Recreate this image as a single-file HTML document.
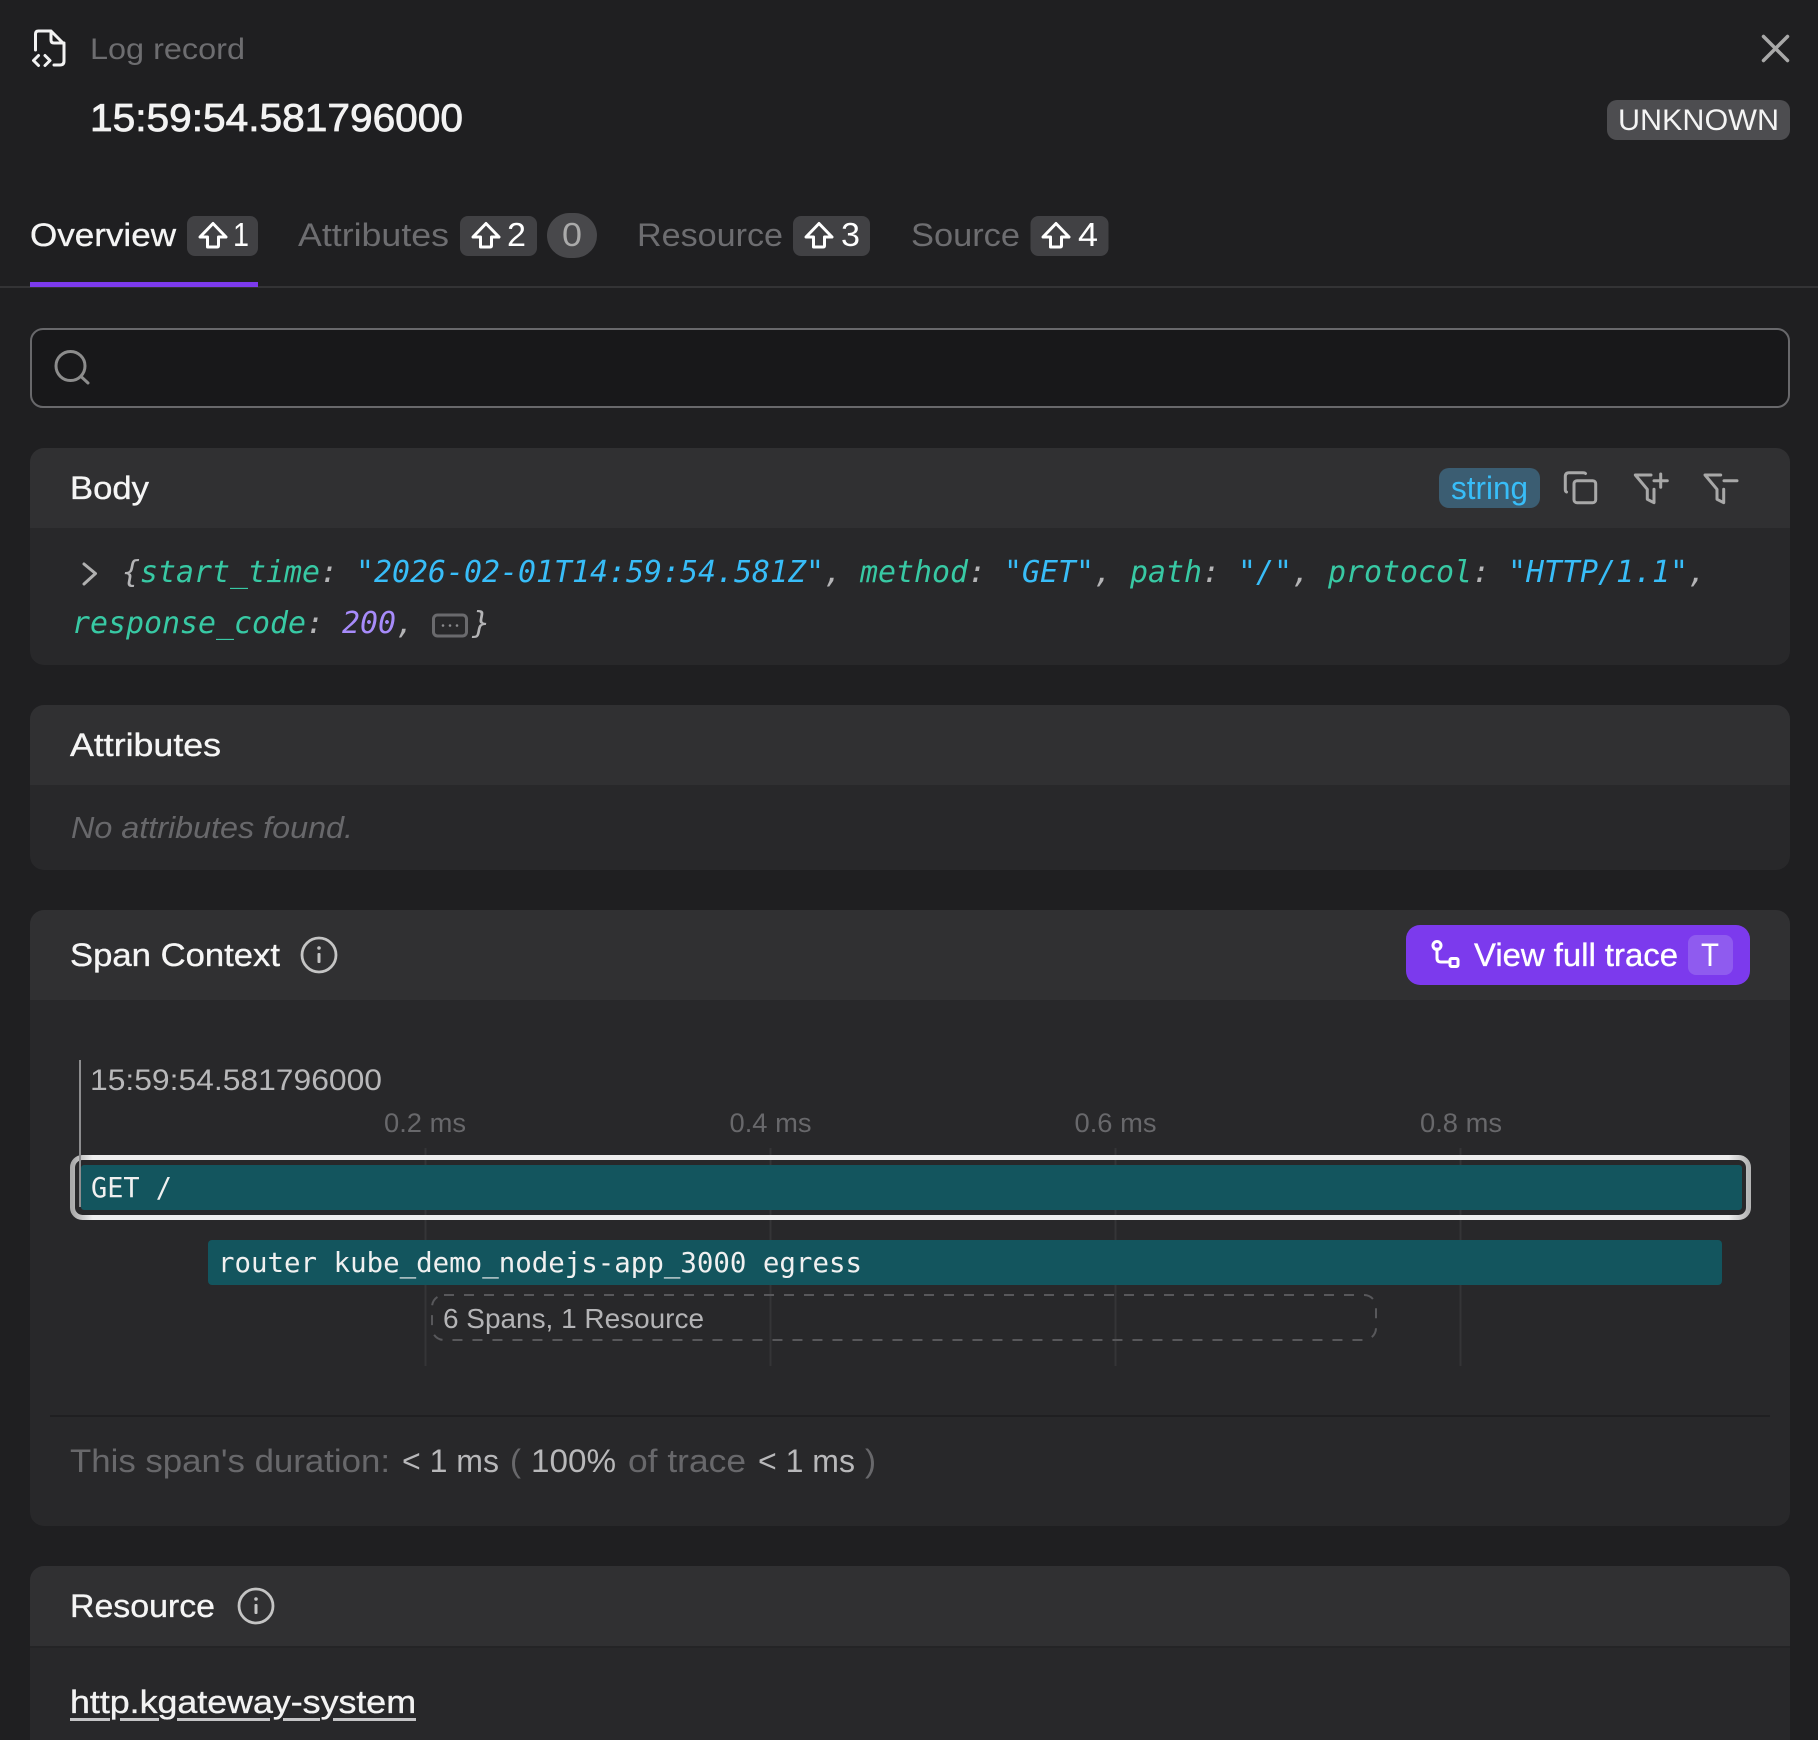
<!DOCTYPE html>
<html><head><meta charset="utf-8"><title>Log record</title>
<style>
html,body{margin:0;padding:0;background:#1f1f21;width:1818px;height:1740px;overflow:hidden}
svg{display:block}
text{font-family:"Liberation Sans",sans-serif;white-space:pre}
.t{stroke:#f5f5f5;stroke-width:.35}
.m{font-family:"DejaVu Sans Mono","Liberation Mono",monospace;font-size:29.9px}
.i{font-style:italic}
.k{fill:#38c9a4}.s{fill:#38bdf8}.n{fill:#a78bfa}.p{fill:#b4b4b6}
.ic{fill:none;stroke-linecap:round;stroke-linejoin:round}
</style></head><body>
<svg width="1818" height="1740" viewBox="0 0 1818 1740" xmlns="http://www.w3.org/2000/svg">
<defs>
<path id="shift" d="M-5.5 12V2H-13L0-11.5 13 2H5.500V10.500Q5.500 12 4 12H-4Q-5.500 12-5.500 10.500Z" fill="none" stroke="#fff" stroke-width="3" stroke-linejoin="round"/>
<g id="info"><circle r="17" fill="none" stroke="#c4c4c4" stroke-width="2.800"/><rect x="-1.500" y="-2" width="3" height="10" rx="1" fill="#c4c4c4"/><circle cy="-7" r="1.800" fill="#c4c4c4"/></g>
<linearGradient id="edge" x1="0" x2="1" y1="0" y2="0"><stop offset="0" stop-color="#aaa"/><stop offset=".012" stop-color="#eee"/><stop offset=".988" stop-color="#eee"/><stop offset="1" stop-color="#b4b4b4"/></linearGradient>
</defs>
<rect width="1818" height="1740" fill="#1f1f21"/>

<!-- header -->
<path class="ic" stroke="#f2f2f2" stroke-width="3" d="M35.500 50V34Q35.500 31 38.500 31H51L64 44V61Q64 65 60 65H54M51 31V40Q51 43 54 43H64M38.500 55.500L33.500 60.500 38.500 65.500M45 55.500L50 60.500 45 65.500"/>
<text x="90" y="59" font-size="30" fill="#6d6d70" textLength="155" lengthAdjust="spacingAndGlyphs">Log record</text>
<text x="90" y="131" font-size="39" fill="#f2f2f2" stroke="#f2f2f2" stroke-width=".8" textLength="373" lengthAdjust="spacingAndGlyphs">15:59:54.581796000</text>
<path class="ic" stroke="#a8a8a8" stroke-width="3.500" d="M1763.500 36.500L1787.500 60.500M1787.500 36.500L1763.500 60.500"/>
<rect x="1607" y="100" width="183" height="40" rx="10" fill="#4d4d50"/>
<text x="1618" y="130" font-size="30" fill="#f4f4f4" textLength="161" lengthAdjust="spacingAndGlyphs">UNKNOWN</text>

<!-- tabs -->
<text x="30" y="246" font-size="32" fill="#f4f4f4" class="t" textLength="146" lengthAdjust="spacingAndGlyphs">Overview</text>
<rect x="187" y="216" width="71" height="40" rx="8" fill="#414144"/>
<use href="#shift" x="213" y="235"/>
<text x="233" y="246" font-size="33" fill="#fff" textLength="16" lengthAdjust="spacingAndGlyphs">1</text>
<text x="298" y="246" font-size="32" fill="#6d6d70" textLength="151" lengthAdjust="spacingAndGlyphs">Attributes</text>
<rect x="460" y="216" width="77" height="40" rx="8" fill="#414144"/>
<use href="#shift" x="486" y="235"/>
<text x="507" y="246" font-size="33" fill="#fff" textLength="19" lengthAdjust="spacingAndGlyphs">2</text>
<rect x="547" y="213" width="50" height="45" rx="22.500" fill="#48484b"/>
<text x="562" y="246" font-size="33" fill="#aaaaaa" textLength="20" lengthAdjust="spacingAndGlyphs">0</text>
<text x="637" y="246" font-size="32" fill="#6d6d70" textLength="146" lengthAdjust="spacingAndGlyphs">Resource</text>
<rect x="793" y="216" width="77" height="40" rx="8" fill="#414144"/>
<use href="#shift" x="819" y="235"/>
<text x="841" y="246" font-size="33" fill="#fff" textLength="19" lengthAdjust="spacingAndGlyphs">3</text>
<text x="911" y="246" font-size="32" fill="#6d6d70" textLength="109" lengthAdjust="spacingAndGlyphs">Source</text>
<rect x="1030.500" y="216" width="78" height="40" rx="8" fill="#414144"/>
<use href="#shift" x="1056" y="235"/>
<text x="1078" y="246" font-size="33" fill="#fff" textLength="20" lengthAdjust="spacingAndGlyphs">4</text>
<rect x="0" y="286" width="1818" height="2" fill="#333335"/>
<rect x="30" y="282" width="228" height="5" fill="#7c3aed"/>

<!-- search -->
<rect x="31" y="329" width="1758" height="78" rx="12" fill="#18181a" stroke="#68686b" stroke-width="2"/>
<circle cx="70.500" cy="366" r="14.500" fill="none" stroke="#8c8c8c" stroke-width="3"/>
<path class="ic" stroke="#8c8c8c" stroke-width="3" d="M81 376.500L88 383"/>

<!-- body card -->
<path d="M30 528V462a14 14 0 0 1 14-14H1776a14 14 0 0 1 14 14V528Z" fill="#303032"/>
<path d="M30 528H1790V651a14 14 0 0 1-14 14H44a14 14 0 0 1-14-14Z" fill="#28282a"/>
<text x="70" y="499" font-size="32" fill="#f5f5f5" class="t" textLength="79" lengthAdjust="spacingAndGlyphs">Body</text>
<rect x="1439" y="468" width="101" height="40" rx="10" fill="#3b5d72"/>
<text x="1451" y="499" font-size="32" fill="#38bdf8" textLength="77" lengthAdjust="spacingAndGlyphs">string</text>
<path class="ic" stroke="#a8a8a8" stroke-width="3" d="M1585.500 473.500Q1585 472.700 1583 472.700H1569Q1565.300 472.700 1565.300 476.500V489.500Q1565.300 491.500 1566.500 492"/>
<rect x="1574" y="480.700" width="21.700" height="22" rx="3" fill="none" stroke="#a8a8a8" stroke-width="3"/>
<path class="ic" stroke="#a8a8a8" stroke-width="3" d="M1651 475H1635.300L1647.300 489.300V499.300L1654 502.700V489.300M1654 480.700H1667.300M1660.700 474V487.300"/>
<path class="ic" stroke="#a8a8a8" stroke-width="3" d="M1720.700 475H1705L1717 489.300V499.300L1723.700 502.700V489.300M1724 480.700H1737"/>
<path class="ic" stroke="#b0b0b0" stroke-width="3" d="M84 564L95.500 573.500 84 584"/>
<text class="m i p" x="122" y="582">{</text>
<text class="m i k" x="140" y="582">start_time</text><text class="m i p" x="320" y="582">:</text>
<text class="m i s" x="356" y="582" textLength="468" lengthAdjust="spacingAndGlyphs">"2026-02-01T14:59:54.581Z"</text><text class="m i p" x="824" y="582">,</text>
<text class="m i k" x="860" y="582">method</text><text class="m i p" x="968" y="582">:</text>
<text class="m i s" x="1004" y="582">"GET"</text><text class="m i p" x="1094" y="582">,</text>
<text class="m i k" x="1130" y="582">path</text><text class="m i p" x="1202" y="582">:</text>
<text class="m i s" x="1238" y="582">"/"</text><text class="m i p" x="1292" y="582">,</text>
<text class="m i k" x="1328" y="582">protocol</text><text class="m i p" x="1472" y="582">:</text>
<text class="m i s" x="1508" y="582">"HTTP/1.1"</text><text class="m i p" x="1688" y="582">,</text>
<text class="m i k" x="72" y="633">response_code</text><text class="m i p" x="306" y="633">:</text>
<text class="m i n" x="342" y="633">200</text><text class="m i p" x="396" y="633">,</text>
<rect x="433.500" y="615" width="33" height="21" rx="4" fill="none" stroke="#6a6a6d" stroke-width="3"/>
<circle cx="443" cy="625.500" r="1.300" fill="#8a8a8d"/><circle cx="450" cy="625.500" r="1.300" fill="#8a8a8d"/><circle cx="457" cy="625.500" r="1.300" fill="#8a8a8d"/>
<text class="m i p" x="472" y="633">}</text>

<!-- attributes card -->
<path d="M30 785V719a14 14 0 0 1 14-14H1776a14 14 0 0 1 14 14V785Z" fill="#303032"/>
<path d="M30 785H1790V856a14 14 0 0 1-14 14H44a14 14 0 0 1-14-14Z" fill="#28282a"/>
<text x="70" y="756" font-size="32" fill="#f5f5f5" class="t" textLength="151" lengthAdjust="spacingAndGlyphs">Attributes</text>
<text x="71" y="838" font-size="31" font-style="italic" fill="#68686b" textLength="282" lengthAdjust="spacingAndGlyphs">No attributes found.</text>

<!-- span context card -->
<path d="M30 1000V924a14 14 0 0 1 14-14H1776a14 14 0 0 1 14 14V1000Z" fill="#303032"/>
<path d="M30 1000H1790V1512a14 14 0 0 1-14 14H44a14 14 0 0 1-14-14Z" fill="#28282a"/>
<text x="70" y="966" font-size="32" fill="#f5f5f5" class="t" textLength="210" lengthAdjust="spacingAndGlyphs">Span Context</text>
<use href="#info" x="319" y="955"/>
<rect x="1406" y="925" width="344" height="60" rx="14" fill="#7c3aed"/>
<path class="ic" stroke="#fff" stroke-width="3" d="M1437 949V958Q1437 962 1441 962H1450"/>
<circle cx="1437" cy="945.500" r="4" fill="none" stroke="#fff" stroke-width="3"/>
<rect x="1450" y="958.500" width="8" height="8" rx="1.500" fill="none" stroke="#fff" stroke-width="3"/>
<text x="1474" y="966" font-size="32" fill="#fff" class="t" style="stroke:#fff" textLength="204" lengthAdjust="spacingAndGlyphs">View full trace</text>
<rect x="1688" y="935" width="45" height="40" rx="8" fill="#8f5bef"/>
<text x="1701" y="966" font-size="32" fill="#fff" textLength="18" lengthAdjust="spacingAndGlyphs">T</text>

<g fill="#353537">
<rect x="424.500" y="1148" width="2" height="218"/><rect x="769.500" y="1148" width="2" height="218"/><rect x="1114.500" y="1148" width="2" height="218"/><rect x="1459.500" y="1148" width="2" height="218"/>
</g>
<text x="90" y="1090" font-size="30" fill="#b8b8ba" textLength="292" lengthAdjust="spacingAndGlyphs">15:59:54.581796000</text>
<g font-size="27" fill="#68686b">
<text x="384" y="1132" textLength="82" lengthAdjust="spacingAndGlyphs">0.2 ms</text>
<text x="729.500" y="1132" textLength="82" lengthAdjust="spacingAndGlyphs">0.4 ms</text>
<text x="1074.500" y="1132" textLength="82" lengthAdjust="spacingAndGlyphs">0.6 ms</text>
<text x="1420" y="1132" textLength="82" lengthAdjust="spacingAndGlyphs">0.8 ms</text>
</g>

<rect x="72.500" y="1157.500" width="1676" height="60" rx="10" fill="none" stroke="url(#edge)" stroke-width="5"/>
<rect x="81" y="1165" width="1661" height="45" rx="3" fill="#13555e"/>
<rect x="79" y="1060" width="2" height="147" fill="#8c8c8e"/>
<text class="m" x="91" y="1197" style="font-size:28px" fill="#f0f0f0" textLength="81" lengthAdjust="spacingAndGlyphs">GET /</text>
<rect x="208" y="1240" width="1514" height="45" rx="4" fill="#13555e"/>
<text class="m" x="218" y="1272" style="font-size:28px" fill="#f0f0f0" textLength="644" lengthAdjust="spacingAndGlyphs">router kube_demo_nodejs-app_3000 egress</text>
<rect x="432" y="1295" width="944" height="45" rx="12" fill="none" stroke="#58585b" stroke-width="2" stroke-dasharray="10 10"/>
<text x="443" y="1328" font-size="28" fill="#b4b4b6" textLength="261" lengthAdjust="spacingAndGlyphs">6 Spans, 1 Resource</text>
<rect x="50" y="1415" width="1720" height="2" fill="#1f1f21"/>

<g font-size="32">
<text x="70" y="1472" fill="#68686b" textLength="320" lengthAdjust="spacingAndGlyphs">This span's duration:</text>
<text x="402" y="1472" fill="#b8b8ba" textLength="97" lengthAdjust="spacingAndGlyphs">&lt; 1 ms</text>
<text x="510" y="1472" fill="#68686b" textLength="11" lengthAdjust="spacingAndGlyphs">(</text>
<text x="531" y="1472" fill="#b8b8ba" textLength="85" lengthAdjust="spacingAndGlyphs">100%</text>
<text x="628" y="1472" fill="#68686b" textLength="118" lengthAdjust="spacingAndGlyphs">of trace</text>
<text x="758" y="1472" fill="#b8b8ba" textLength="97" lengthAdjust="spacingAndGlyphs">&lt; 1 ms</text>
<text x="865" y="1472" fill="#68686b" textLength="11" lengthAdjust="spacingAndGlyphs">)</text>
</g>

<!-- resource card -->
<path d="M30 1646V1580a14 14 0 0 1 14-14H1776a14 14 0 0 1 14 14V1646Z" fill="#303032"/>
<rect x="30" y="1646" width="1760" height="94" fill="#28282a"/>
<rect x="30" y="1646" width="1760" height="2" fill="#242426"/>
<text x="70" y="1617" font-size="32" fill="#f5f5f5" class="t" textLength="145" lengthAdjust="spacingAndGlyphs">Resource</text>
<use href="#info" x="256" y="1606"/>
<text x="70" y="1713" font-size="32" fill="#f2f2f2" class="t" textLength="346" lengthAdjust="spacingAndGlyphs">http.kgateway-system</text>
<g fill="#c4c4c6">
<rect x="70" y="1718" width="40" height="3"/><rect x="120" y="1718" width="39" height="3"/><rect x="177" y="1718" width="93" height="3"/><rect x="283" y="1718" width="37" height="3"/><rect x="333" y="1718" width="83" height="3"/>
</g>
</svg>
</body></html>
